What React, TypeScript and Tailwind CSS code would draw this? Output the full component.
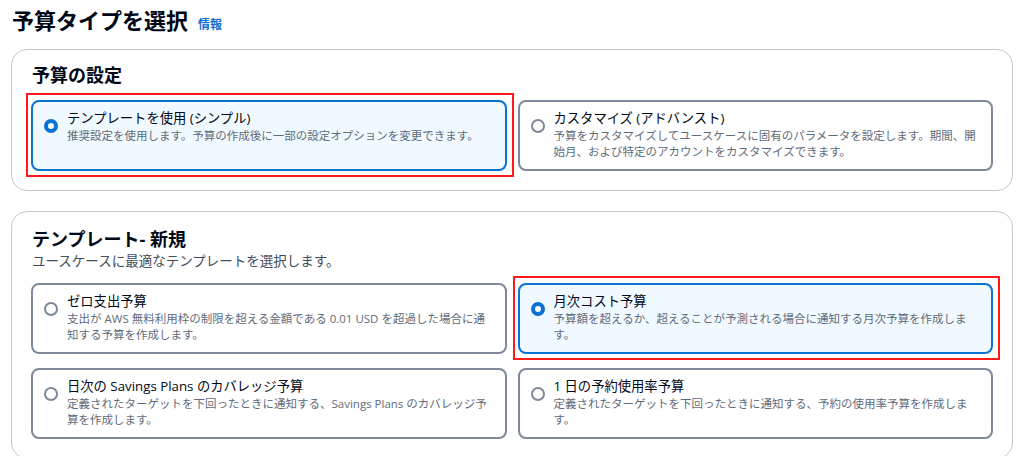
import React from 'react';

type Tile = {
  label: string;
  // description split the way it wraps at this width
  lines: string[];
  selected?: boolean;
  marked?: boolean;
};

const settingTiles: Tile[] = [
  {
    label: 'テンプレートを使用 (シンプル)',
    lines: ['推奨設定を使用します。予算の作成後に一部の設定オプションを変更できます。'],
    selected: true,
    marked: true,
  },
  {
    label: 'カスタマイズ (アドバンスト)',
    lines: [
      '予算をカスタマイズしてユースケースに固有のパラメータを設定します。期間、開',
      '始月、および特定のアカウントをカスタマイズできます。',
    ],
  },
];

const templateTiles: Tile[] = [
  {
    label: 'ゼロ支出予算',
    lines: [
      '支出が AWS 無料利用枠の制限を超える金額である 0.01 USD を超過した場合に通',
      '知する予算を作成します。',
    ],
  },
  {
    label: '月次コスト予算',
    lines: ['予算額を超えるか、超えることが予測される場合に通知する月次予算を作成しま', 'す。'],
    selected: true,
    marked: true,
  },
  {
    label: '日次の Savings Plans のカバレッジ予算',
    lines: ['定義されたターゲットを下回ったときに通知する、Savings Plans のカバレッジ予', '算を作成します。'],
  },
  {
    label: '1 日の予約使用率予算',
    lines: ['定義されたターゲットを下回ったときに通知する、予約の使用率予算を作成しま', 'す。'],
  },
];

const Radio: React.FC<{ checked?: boolean }> = ({ checked }) => (
  <span
    className={`mt-[11px] block h-[14px] w-[14px] shrink-0 rounded-full bg-white ${
      checked ? 'border-[4px] border-[#0972d3]' : 'border-[2px] border-[#7d8998]'
    }`}
  />
);

const TileCard: React.FC<{ tile: Tile }> = ({ tile }) => (
  <div className="relative">
    <div
      className={`flex h-full gap-[9px] rounded-[8px] border-2 pb-[9px] pl-[11px] pr-[4px] pt-[6px] ${
        tile.selected ? 'border-[#0972d3] bg-[#f0f9ff]' : 'border-[#7d8998] bg-white'
      }`}
    >
      <Radio checked={tile.selected} />
      <div className="min-w-0">
        <div className="text-[13.3px] leading-[20px] text-[#000716]">{tile.label}</div>
        <div className="text-[11.5px] leading-[16px] text-[#5f6b7a]">
          {tile.lines.map((line) => (
            <div key={line} className="whitespace-nowrap">
              {line}
            </div>
          ))}
        </div>
      </div>
    </div>
    {tile.marked && (
      <span className="pointer-events-none absolute -bottom-[6px] -left-[5px] -right-[7px] -top-[7px] border-2 border-[#ff1a1a]" />
    )}
  </div>
);

export default function App() {
  return (
    <div className="h-[456px] w-full overflow-hidden bg-white px-[11px] pt-[6px] font-['Open_Sans','Noto_Sans_CJK_JP',sans-serif] text-[#000716]">
      <div className="mb-[15px] flex items-baseline gap-[10px] pl-[1px]">
        <h1 className="text-[22px] font-bold leading-[28px]">予算タイプを選択</h1>
        <span className="text-[12px] font-bold text-[#0972d3]">情報</span>
      </div>

      <section className="mb-[20px] w-[1002px] rounded-[16px] border border-[#c6c6cd] px-[19px] pb-[19px] pt-[13px]">
        <h2 className="mb-[13px] pl-[1px] text-[18px] font-bold leading-[24px]">予算の設定</h2>
        <div className="grid grid-cols-2 gap-x-[11px]">
          {settingTiles.map((t) => (
            <TileCard key={t.label} tile={t} />
          ))}
        </div>
      </section>

      <section className="w-[1002px] rounded-[16px] border border-[#c6c6cd] px-[19px] pb-[19px] pt-[15px]">
        <h2 className="pl-[1px] text-[18px] font-bold leading-[24px]">テンプレート- 新規</h2>
        <p className="mb-[12px] pl-[1px] text-[13.5px] leading-[20px] text-[#414d5c]">
          ユースケースに最適なテンプレートを選択します。
        </p>
        <div className="grid grid-cols-2 gap-x-[11px] gap-y-[14px]">
          {templateTiles.map((t) => (
            <TileCard key={t.label} tile={t} />
          ))}
        </div>
      </section>
    </div>
  );
}
